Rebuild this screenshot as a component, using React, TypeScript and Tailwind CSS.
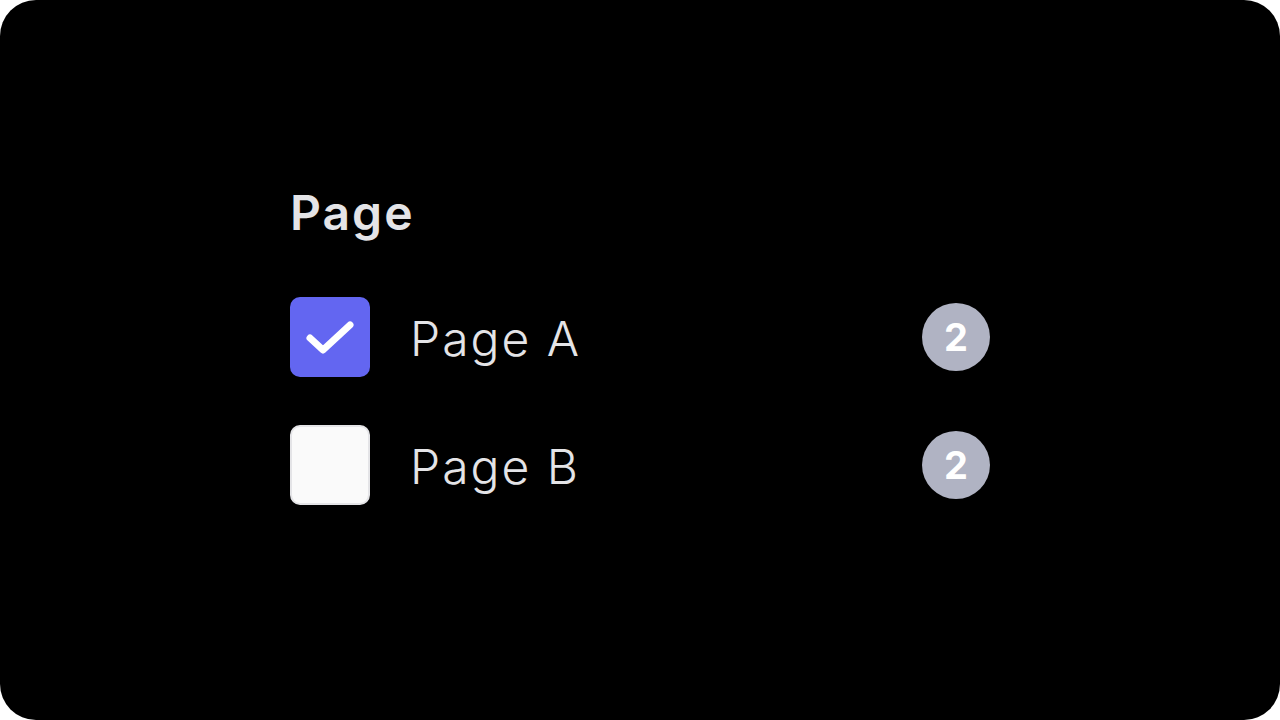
const rows = [
  { label: 'Page A', checked: true, count: 2 },
  { label: 'Page B', checked: false, count: 2 },
]

function CheckMark() {
  return (
    <svg width="80" height="80" viewBox="0 0 80 80" fill="none">
      <polyline
        points="20,41 33,53 60,28"
        stroke="white"
        strokeWidth="7"
        strokeLinecap="round"
        strokeLinejoin="round"
      />
    </svg>
  )
}

export default function App() {
  return (
    <div className="w-[1280px] h-[720px] bg-white">
      <div
        className="w-full h-full bg-black rounded-[36px] pt-[189px] pl-[290px]"
        style={{ fontFamily: 'Inter, "Noto Sans", sans-serif' }}
      >
        <div className="w-[700px]">
          <h1 className="text-[48px] leading-[48px] font-semibold text-[#e4e4e7] tracking-[2px]">Page</h1>
          <div className="mt-[60px] flex flex-col gap-12">
            {rows.map((row) => (
              <div key={row.label} className="flex items-center h-20">
                {row.checked ? (
                  <div className="w-20 h-20 rounded-[10px] bg-[#6366f1] flex items-center justify-center">
                    <CheckMark />
                  </div>
                ) : (
                  <div className="w-20 h-20 rounded-[10px] bg-[#fafafa] border-2 border-[#e4e4e7]" />
                )}
                <span className="ml-10 pt-[4px] text-[48px] leading-none font-light text-[#e4e4e7] tracking-[2px]">
                  {row.label}
                </span>
                <div className="ml-auto w-[68px] h-[68px] rounded-full bg-[#b0b3c3] flex items-center justify-center">
                  <span className="text-[38px] leading-none font-bold text-white">{row.count}</span>
                </div>
              </div>
            ))}
          </div>
        </div>
      </div>
    </div>
  )
}
